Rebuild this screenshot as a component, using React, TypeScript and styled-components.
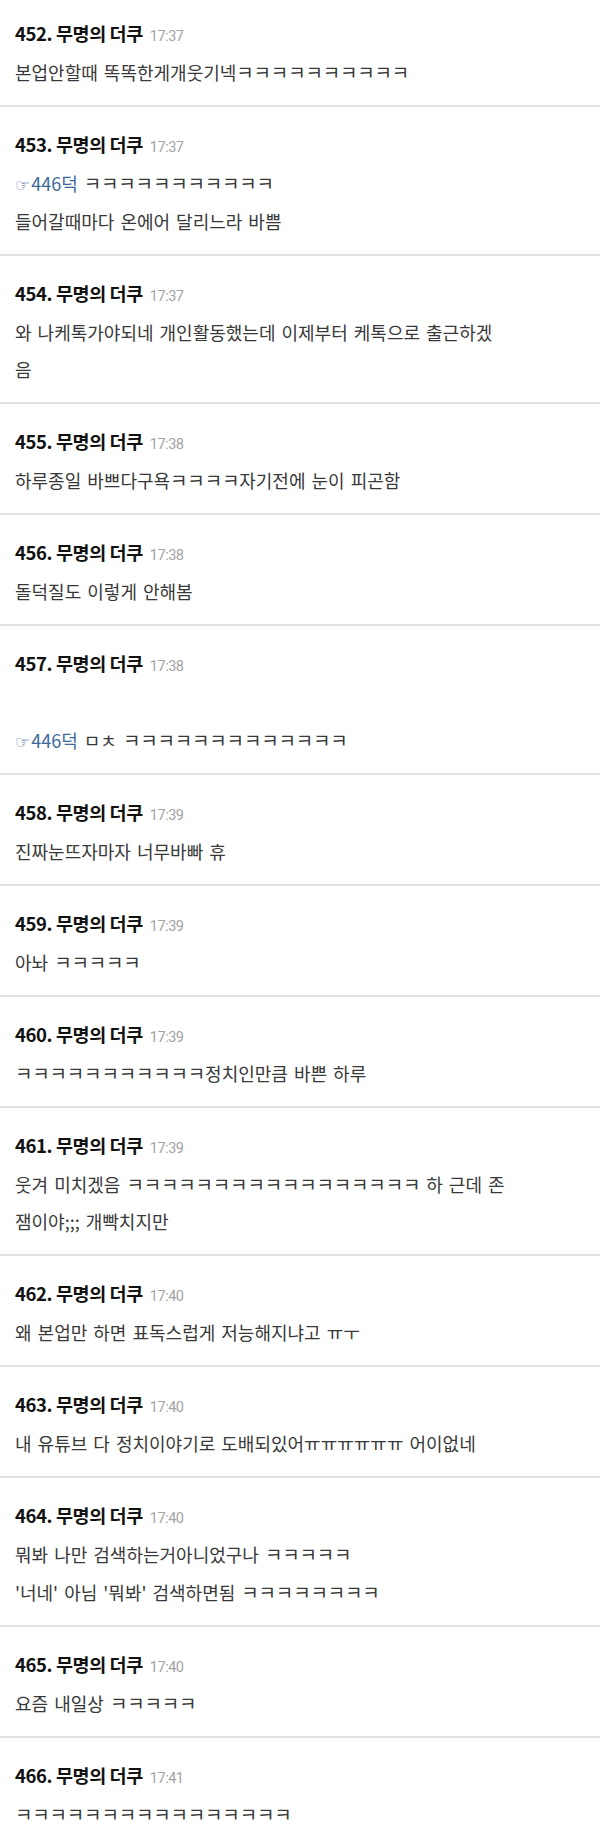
import React from "react";
import styled, { createGlobalStyle } from "styled-components";

const GlobalStyle = createGlobalStyle`
  html, body { margin: 0; padding: 0; background: #ffffff; }
  body { font-family: "Noto Sans CJK KR", "Noto Sans", sans-serif; }
`;

const List = styled.div`
  display: flex;
  flex-direction: column;
  width: 600px;
  background: #fff;
`;

const Post = styled.article`
  padding: 24px 15px 13.5px;
  border-bottom: 2px solid #e3e3e3;
  &:first-child { padding-top: 20px; }
  &:last-child { border-bottom: none; }
`;

const Header = styled.div`
  display: flex;
  align-items: baseline;
  height: 26px;
  line-height: 26px;
`;

const Name = styled.span`
  font-family: "Noto Sans CJK KR", sans-serif;
  font-weight: 700;
  font-size: 18.5px;
  color: #111;
  letter-spacing: -0.4px;
`;

const Time = styled.span`
  font-family: Roboto, "Liberation Sans", sans-serif;
  font-size: 14.5px;
  color: #a3a3a3;
  margin-left: 7px;
  letter-spacing: -0.5px;
`;

const Body = styled.div`
  margin-top: 8px;
  font-family: "Noto Sans CJK KR", sans-serif;
  font-size: 18px;
  word-spacing: 2px;
  color: #383838;
  line-height: 37.5px;
`;

const Line = styled.div`
  height: 37.5px;
  white-space: nowrap;
`;

const Laugh = styled.span`
  font-size: 19px;
  line-height: 1;
  letter-spacing: -0.2px;
`;

const Ref = styled.span`
  color: #3b699b;
  margin-right: 6px;
`;

const Hand = styled.span`
  font-family: "DejaVu Sans", sans-serif;
  font-size: 17px;
  line-height: 1;
  margin-right: 1px;
`;

type Seg = string | { ref: string };
type PostData = { no: number; time: string; lines: Seg[][] };

const k = (n: number) => "ㅋ".repeat(n);

const posts: PostData[] = [
  { no: 452, time: "17:37", lines: [[`본업안할때 똑똑한게개웃기넥${k(10)}`]] },
  { no: 453, time: "17:37", lines: [[{ ref: "446덕" }, k(11)], ["들어갈때마다 온에어 달리느라 바쁨"]] },
  { no: 454, time: "17:37", lines: [["와 나케톡가야되네 개인활동했는데 이제부터 케톡으로 출근하겠"], ["음"]] },
  { no: 455, time: "17:38", lines: [[`하루종일 바쁘다구욕${k(4)}자기전에 눈이 피곤함`]] },
  { no: 456, time: "17:38", lines: [["돌덕질도 이렇게 안해봄"]] },
  { no: 457, time: "17:38", lines: [[], [{ ref: "446덕" }, `ㅁㅊ ${k(13)}`]] },
  { no: 458, time: "17:39", lines: [["진짜눈뜨자마자 너무바빠 휴"]] },
  { no: 459, time: "17:39", lines: [[`아놔 ${k(5)}`]] },
  { no: 460, time: "17:39", lines: [[`${k(11)}정치인만큼 바쁜 하루`]] },
  { no: 461, time: "17:39", lines: [[`웃겨 미치겠음 ${k(17)} 하 근데 존`], ["잼이야;;; 개빡치지만"]] },
  { no: 462, time: "17:40", lines: [["왜 본업만 하면 표독스럽게 저능해지냐고 ㅠㅜ"]] },
  { no: 463, time: "17:40", lines: [["내 유튜브 다 정치이야기로 도배되있어ㅠㅠㅠㅠㅠㅠ 어이없네"]] },
  { no: 464, time: "17:40", lines: [[`뭐봐 나만 검색하는거아니었구나 ${k(5)}`], [`'너네' 아님 '뭐봐' 검색하면됨 ${k(8)}`]] },
  { no: 465, time: "17:40", lines: [[`요즘 내일상 ${k(5)}`]] },
  { no: 466, time: "17:41", lines: [[k(16)]] },
];

function renderText(s: string) {
  return s.split(/(ㅋ+)/).map((part, i) =>
    part.startsWith("ㅋ") ? <Laugh key={i}>{part}</Laugh> : <React.Fragment key={i}>{part}</React.Fragment>
  );
}

export default function App() {
  return (
    <>
      <GlobalStyle />
      <List>
        {posts.map((p) => (
          <Post key={p.no}>
            <Header>
              <Name>{p.no}. 무명의 더쿠</Name>
              <Time>{p.time}</Time>
            </Header>
            <Body>
              {p.lines.map((segs, i) => (
                <Line key={i}>
                  {segs.map((s, j) =>
                    typeof s === "string" ? (
                      <React.Fragment key={j}>{renderText(s)}</React.Fragment>
                    ) : (
                      <Ref key={j}>
                        <Hand>☞</Hand>
                        {s.ref}
                      </Ref>
                    )
                  )}
                </Line>
              ))}
            </Body>
          </Post>
        ))}
      </List>
    </>
  );
}
